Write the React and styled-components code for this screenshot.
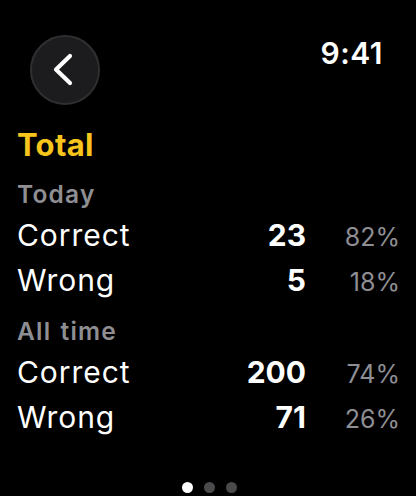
import React from "react";
import styled, { createGlobalStyle } from "styled-components";

const Global = createGlobalStyle`
  html, body { margin: 0; padding: 0; background: #000; }
  body { font-family: Inter, "Noto Sans", sans-serif; -webkit-font-smoothing: antialiased; }
`;

const Screen = styled.div`
  width: 416px;
  height: 496px;
  box-sizing: border-box;
  background: #000;
  color: #fff;
  display: flex;
  flex-direction: column;
  padding: 35px 16px 3px 17px;
  overflow: hidden;
`;

const Header = styled.div`
  display: flex;
  justify-content: space-between;
  align-items: flex-start;
  padding: 0 17px 0 13px;
`;

const BackButton = styled.button`
  width: 70px;
  height: 70px;
  border-radius: 50%;
  background: #1c1c1e;
  border: 2px solid #2f2f31;
  box-sizing: border-box;
  display: flex;
  align-items: center;
  justify-content: center;
  padding: 0;
  cursor: pointer;
`;

const Time = styled.div`
  font-size: 30px;
  line-height: 36px;
  font-weight: 600;
  letter-spacing: 0.5px;
`;

const Title = styled.div`
  margin-top: 20px;
  font-size: 31px;
  line-height: 40px;
  font-weight: 700;
  letter-spacing: 0.3px;
  color: #f8c51c;
`;

const Section = styled.div`
  margin-top: ${(p) => p.$gap}px;
`;

const SectionLabel = styled.div`
  font-size: 24.5px;
  line-height: 37px;
  font-weight: 600;
  letter-spacing: 1.2px;
  word-spacing: 2px;
  color: #8e8e93;
`;

const Row = styled.div`
  display: grid;
  grid-template-columns: 1fr auto 93px;
  align-items: baseline;
  height: 45px;
  line-height: 45px;
`;

const Label = styled.span`
  font-size: 30px;
  font-weight: 400;
  letter-spacing: 0.95px;
`;

const Count = styled.span`
  font-size: 30px;
  font-weight: 700;
  text-align: right;
  margin-right: 1px;
`;

const Percent = styled.span`
  font-size: 25px;
  font-weight: 400;
  color: #8e8e93;
  text-align: right;
`;

const Dots = styled.div`
  margin-top: auto;
  display: flex;
  justify-content: center;
  gap: 11px;
  padding-left: 1px;
`;

const Dot = styled.span`
  width: 11px;
  height: 11px;
  border-radius: 50%;
  background: ${(p) => (p.$active ? "#fff" : "#4a4a4c")};
`;

const sections = [
  {
    label: "Today",
    gap: 11,
    rows: [
      { label: "Correct", count: 23, pct: "82%" },
      { label: "Wrong", count: 5, pct: "18%" },
    ],
  },
  {
    label: "All time",
    gap: 10,
    rows: [
      { label: "Correct", count: 200, pct: "74%" },
      { label: "Wrong", count: 71, pct: "26%" },
    ],
  },
];

export default function App() {
  return (
    <>
      <Global />
      <Screen>
        <Header>
          <BackButton aria-label="Back">
            <svg width="30" height="40" viewBox="0 0 30 40">
              <polyline
                points="20,6 6,19.5 20,33"
                fill="none"
                stroke="#fff"
                strokeWidth="4.2"
                strokeLinecap="round"
                strokeLinejoin="round"
              />
            </svg>
          </BackButton>
          <Time>9:41</Time>
        </Header>
        <Title>Total</Title>
        {sections.map((s) => (
          <Section key={s.label} $gap={s.gap}>
            <SectionLabel>{s.label}</SectionLabel>
            {s.rows.map((r) => (
              <Row key={r.label}>
                <Label>{r.label}</Label>
                <Count>{r.count}</Count>
                <Percent>{r.pct}</Percent>
              </Row>
            ))}
          </Section>
        ))}
        <Dots>
          <Dot $active />
          <Dot />
          <Dot />
        </Dots>
      </Screen>
    </>
  );
}
